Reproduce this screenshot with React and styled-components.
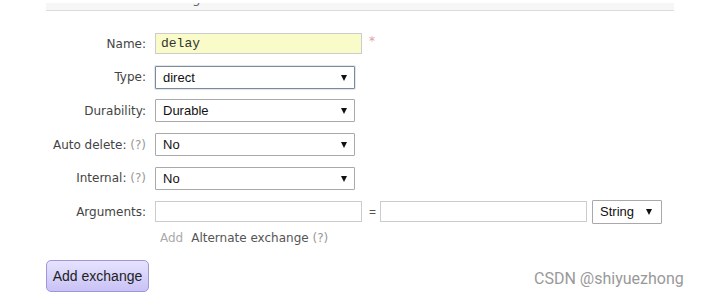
import React from 'react';
import styled, { createGlobalStyle } from 'styled-components';

const GlobalStyle = createGlobalStyle`
  html, body {
    margin: 0;
    background: #fff;
  }
  body {
    font-family: "DejaVu Sans", Verdana, sans-serif;
    font-size: 12px;
    color: #444;
  }
`;

const Page = styled.div`
  position: relative;
  width: 702px;
  height: 299px;
  overflow: hidden;
  padding-top: 3px;
  box-sizing: border-box;
`;

const SectionHead = styled.div`
  margin-left: 46px;
  width: 628px;
  height: 8px;
  background: #f6f6f6;
  border-bottom: 1px solid #dcdcdc;
  overflow: hidden;
  padding-left: 27px;
  box-sizing: border-box;
  h2 {
    margin: -12px 0 0;
    font-size: 13px;
    font-weight: normal;
    color: #666;
    line-height: 16px;
  }
`;

const Form = styled.div`
  padding: 16px 0 0 46px;
`;

const Row = styled.div`
  display: grid;
  grid-template-columns: 100px auto;
  column-gap: 9px;
  align-items: center;
  height: 33.6px;
`;

const Label = styled.label`
  text-align: right;
  white-space: nowrap;
  color: #444;
`;

const Help = styled.span`
  color: #999;
`;

const Fields = styled.div`
  display: flex;
  align-items: center;
`;

const TextInput = styled.div`
  width: ${p => p.$w || 207}px;
  height: 21px;
  box-sizing: border-box;
  border: 1px solid #ccc;
  background: ${p => (p.$highlight ? '#f9fbc9' : '#fff')};
  font-family: "Liberation Mono", monospace;
  font-size: 13px;
  color: #333;
  padding-left: 5px;
  line-height: 19px;
`;

const Select = styled.div`
  width: ${p => p.$w || 200}px;
  height: ${p => p.$h || 23}px;
  box-sizing: border-box;
  border: 1px solid ${p => (p.$focused ? '#7c8b9c' : '#a9a9a9')};
  border-radius: 1px;
  box-shadow: ${p => (p.$focused ? '0 0 0 1px #dfe6ee' : 'none')};
  background: #fff;
  display: flex;
  align-items: center;
  justify-content: space-between;
  padding: 0 ${p => p.$pr || 7}px 0 7px;
  margin-left: ${p => p.$ml || 0}px;
  font-family: "Liberation Sans", Arial, sans-serif;
  font-size: 13px;
  color: #111;
`;

const Arrow = styled.span`
  width: 0;
  height: 0;
  border-left: 3px solid transparent;
  border-right: 3px solid transparent;
  border-top: 6px solid #111;
  margin-top: 1px;
`;

const Required = styled.span`
  color: #e89aa8;
  margin-left: 7px;
  font-size: 12px;
  position: relative;
  top: -3px;
`;

const Equals = styled.span`
  font-family: "Liberation Sans", Arial, sans-serif;
  color: #555;
  font-size: 12px;
  margin: 0 4px 0 7px;
`;

const LinkRow = styled.div`
  padding-left: 114px;
  height: 26px;
  display: flex;
  align-items: center;
  gap: 8px;
  margin-top: -4px;
`;

const Muted = styled.span`
  color: #aaa;
`;

const Text = styled.span`
  color: #555;
`;

const Button = styled.button`
  margin-top: 9px;
  width: 103px;
  height: 32px;
  border: 1px solid #9f97d6;
  border-radius: 5px;
  background: linear-gradient(#e6e3ff, #c9c2f6);
  font-family: "Liberation Sans", Arial, sans-serif;
  font-size: 14px;
  color: #222;
  padding: 0;
`;

const Watermark = styled.div`
  position: absolute;
  left: 534px;
  top: 269px;
  font-family: Roboto, "Liberation Sans", sans-serif;
  font-size: 16px;
  color: #999;
`;

export default function App() {
  return (
    <Page>
      <GlobalStyle />
      <SectionHead>
        <h2>Add a new exchange</h2>
      </SectionHead>
      <Form>
        <Row>
          <Label>Name:</Label>
          <Fields>
            <TextInput $highlight>delay</TextInput>
            <Required>*</Required>
          </Fields>
        </Row>
        <Row>
          <Label>Type:</Label>
          <Select $focused>
            direct <Arrow />
          </Select>
        </Row>
        <Row>
          <Label>Durability:</Label>
          <Select>
            Durable <Arrow />
          </Select>
        </Row>
        <Row>
          <Label>
            Auto delete: <Help>(?)</Help>
          </Label>
          <Select>
            No <Arrow />
          </Select>
        </Row>
        <Row>
          <Label>
            Internal: <Help>(?)</Help>
          </Label>
          <Select>
            No <Arrow />
          </Select>
        </Row>
        <Row>
          <Label>Arguments:</Label>
          <Fields>
            <TextInput />
            <Equals>=</Equals>
            <TextInput />
            <Select $w={70} $h={24} $ml={5} $pr={9}>
              String <Arrow />
            </Select>
          </Fields>
        </Row>
        <LinkRow>
          <Muted>Add</Muted>
          <Text>
            Alternate exchange <Help>(?)</Help>
          </Text>
        </LinkRow>
        <Button>Add exchange</Button>
      </Form>
      <Watermark>CSDN @shiyuezhong</Watermark>
    </Page>
  );
}
